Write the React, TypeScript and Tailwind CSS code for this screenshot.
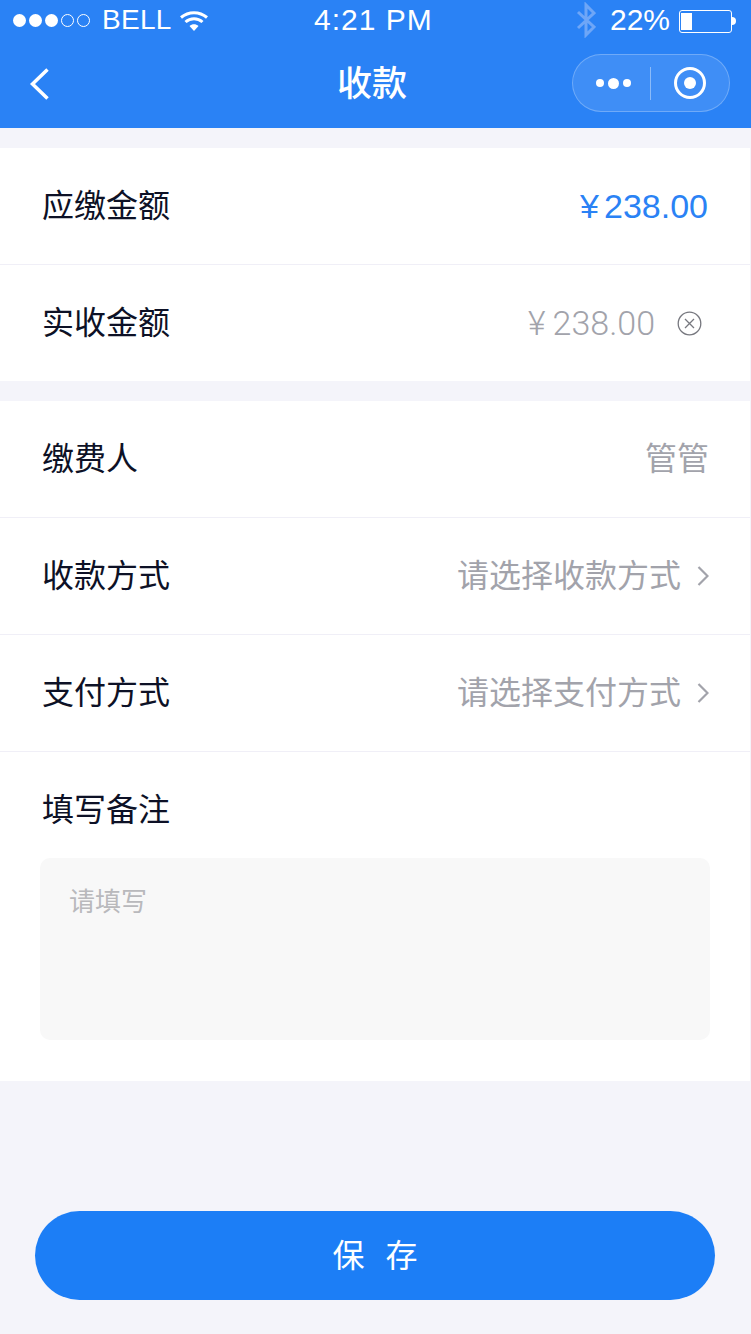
const fontStack = "font-['Liberation_Sans','Noto_Sans_CJK_SC',sans-serif]";

function StatusBar() {
  return (
    <div className="flex h-10 items-center justify-between pl-[13px] pr-[15px] text-[30px] leading-10 text-white">
      <div className="flex w-[300px] items-center">
        <div className="flex items-center gap-[3px]">
          <span className="size-[13px] rounded-full bg-white" />
          <span className="size-[13px] rounded-full bg-white" />
          <span className="size-[13px] rounded-full bg-white" />
          <span className="size-[13px] rounded-full border border-white" />
          <span className="size-[13px] rounded-full border border-white" />
        </div>
        <span className="ml-[12px] text-[28px] tracking-[0.3px]">BELL</span>
        <svg className="ml-[8px] mt-[1px]" width="28" height="22" viewBox="0 0 28 22" fill="none">
          <path d="M1 7.500C8.500 1 19.500 1 27 7.500" stroke="white" strokeWidth="3" />
          <path d="M5.500 12C10.500 7.500 17.500 7.500 22.500 12" stroke="white" strokeWidth="3" />
          <path d="M9.500 16C12 13.700 16 13.700 18.500 16L14 21Z" fill="white" />
        </svg>
      </div>
      <span className="absolute left-[314px] text-[30px] tracking-[1px]">4:21 PM</span>
      <div className="flex items-center">
        <svg width="20" height="36" viewBox="0 0 20 36" fill="none" stroke="#6ea6f7" strokeWidth="3">
          <path d="M2 10L18 25L10 33V3L18 11L2 26" />
        </svg>
        <span className="ml-[14px] text-[30px]">22%</span>
        <div className="ml-[9px] mt-[2px] flex items-center">
          <div className="flex h-[23px] w-[53px] items-center rounded-[3px] border border-white p-[1px]">
            <div className="h-[17px] w-[11px] bg-white" />
          </div>
          <div className="h-[8px] w-[4px] rounded-r-full bg-white" />
        </div>
      </div>
    </div>
  );
}

function NavBar() {
  return (
    <div className="flex h-[88px] items-center justify-between pl-[28px] pr-[21px]">
      <svg width="24" height="34" viewBox="0 0 24 34" fill="none" stroke="white" strokeWidth="3.500">
        <path d="M19.500 2.500L4.500 17L19.500 31.500" />
      </svg>
      <span className="absolute left-0 right-[7px] text-center text-[35px] font-medium text-white">收款</span>
      <div className="mb-[2px] flex h-[58px] w-[158px] items-center rounded-full border border-white/25 bg-white/10">
        <div className="flex w-[77px] items-center justify-center gap-[4px] pl-[4px]">
          <span className="size-[8px] rounded-full bg-white" />
          <span className="size-[11px] rounded-full bg-white" />
          <span className="size-[8px] rounded-full bg-white" />
        </div>
        <div className="h-[33px] w-px bg-white/40" />
        <div className="flex flex-1 items-center justify-center pr-[1px]">
          <div className="flex size-[32px] items-center justify-center rounded-full border-[3px] border-white">
            <span className="size-[12px] rounded-full bg-white" />
          </div>
        </div>
      </div>
    </div>
  );
}

function Row({ label, children, last }: { label: string; children: React.ReactNode; last?: boolean }) {
  return (
    <div className={`flex items-center justify-between pl-[42px] pr-[41px] ${last ? "h-[116px]" : "h-[117px] border-b border-[#f0eff7]"}`}>
      <span className="text-[32px] text-[#0d1126]">{label}</span>
      {children}
    </div>
  );
}

function SelectValue({ text }: { text: string }) {
  return (
    <div className="flex items-center">
      <span className="text-[32px] text-[#a2a3ab]">{text}</span>
      <svg className="ml-[16px]" width="12" height="20" viewBox="0 0 12 20" fill="none" stroke="#a2a3ab" strokeWidth="2.200">
        <path d="M1.500 1L10.500 10L1.500 19" />
      </svg>
    </div>
  );
}

export default function App() {
  return (
    <div className={`relative min-h-[1334px] w-[751px] bg-[#f4f4fa] ${fontStack}`}>
      <header className="relative bg-[#2a82f5]">
        <StatusBar />
        <NavBar />
      </header>

      <main className="w-[750px] pt-5">
        <section className="bg-white">
          <Row label="应缴金额">
            <span className="mr-[1px] text-[34px] text-[#2a82f5]">
              <span className="mr-[5px]">¥</span>238.00
            </span>
          </Row>
          <Row label="实收金额" last>
            <div className="flex items-center">
              <span className="font-['Roboto','Noto_Sans_CJK_SC',sans-serif] text-[34px] font-light text-[#a2a3ab]">
                <span className="mr-[7px]">¥</span>238.00
              </span>
              <svg className="ml-[22px] mr-[7px]" width="25" height="25" viewBox="0 0 25 25" fill="none" stroke="#77787f" strokeWidth="1.300">
                <circle cx="12.500" cy="12.500" r="11.300" />
                <path d="M8 8L17 17M17 8L8 17" />
              </svg>
            </div>
          </Row>
        </section>

        <section className="mt-5 bg-white">
          <Row label="缴费人">
            <span className="text-[32px] text-[#a2a3ab]">管管</span>
          </Row>
          <Row label="收款方式">
            <SelectValue text="请选择收款方式" />
          </Row>
          <Row label="支付方式">
            <SelectValue text="请选择支付方式" />
          </Row>
          <div className="h-[329px] px-10 pt-[38px]">
            <div className="pl-[2px] text-[32px] leading-10 text-[#0d1126]">填写备注</div>
            <div className="mt-[28px] h-[182px] rounded-[10px] bg-[#f8f8f8] px-[29px] pt-[25px] text-[26px] leading-[38px] text-[#b9b9bc]">
              请填写
            </div>
          </div>
        </section>

        <div className="px-[35px] pt-[130px]">
          <button className="h-[89px] w-[680px] rounded-full bg-[#1c7ef6] pl-[21px] text-[32px] tracking-[21px] text-white" type="button">
            保存
          </button>
        </div>
      </main>
    </div>
  );
}
